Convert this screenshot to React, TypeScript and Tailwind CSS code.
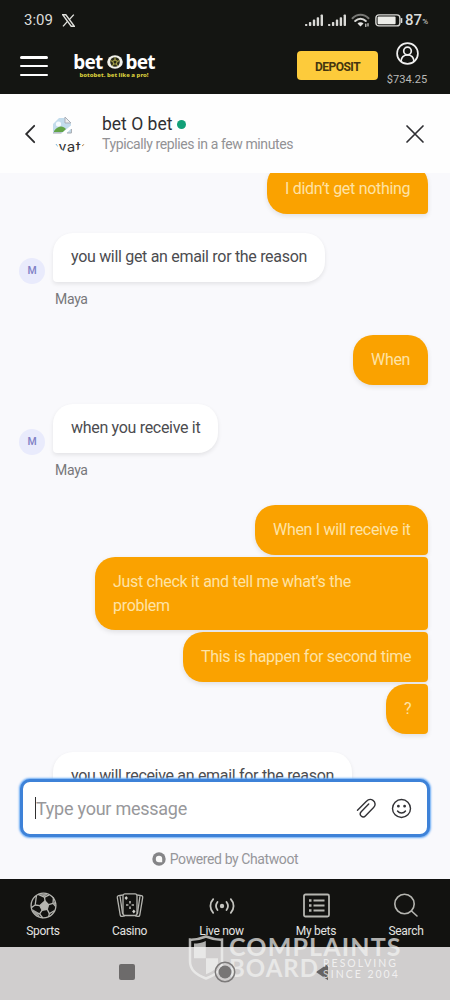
import React from "react";

function Signal() {
  return (
    <svg width="19" height="13" viewBox="0 0 19 13" fill="#d9d9d6">
      <rect x="0" y="10" width="2.4" height="2" rx=".8" />
      <rect x="3.9" y="8" width="2.4" height="4" rx=".8" />
      <rect x="7.8" y="5.6" width="2.4" height="6.4" rx=".8" />
      <rect x="11.7" y="3.2" width="2.4" height="8.8" rx=".8" />
      <rect x="15.6" y=".5" width="2.4" height="11.5" rx=".8" />
    </svg>
  );
}

function StatusBar() {
  return (
    <div className="flex h-10 items-center pl-[24px] pr-[22px] text-[#dcdcda]">
      <span className="w-[30px] text-[15px] leading-none">3:09</span>
      <svg className="ml-[8px]" width="13" height="13" viewBox="0 0 13 13" fill="none" stroke="#e0e0dc">
        <path d="M.8.8h3L12.2 12.2h-3z" strokeWidth="1.4" />
        <path d="M11.8.6 7.3 5.6M5.5 7.4 1 12.4" strokeWidth="1.4" />
      </svg>
      <div className="ml-auto flex items-center">
        <Signal />
        <span className="w-[4px]" />
        <Signal />
        <svg className="ml-[4px]" width="20" height="15" viewBox="0 0 20 15" fill="none" strokeLinecap="round">
          <path d="M1.5 5.2C6 .5 13 .5 17.5 5.2" stroke="#777774" strokeWidth="2" />
          <path d="M4.2 8C7.3 5 11.7 5 14.8 8" stroke="#d9d9d6" strokeWidth="2" />
          <path d="M6.5 10.4c1.8-1.6 4.2-1.6 6 0L9.5 13.5z" fill="#e4e4e2" />
          <path d="M14.8 11v2.5M17 10.5V13" stroke="#d9d9d6" strokeWidth="1.2" />
        </svg>
        <svg className="ml-[4px]" width="28" height="13" viewBox="0 0 28 13">
          <rect x=".9" y=".9" width="24" height="11" rx="3" fill="none" stroke="#d9d9d6" strokeWidth="1.4" />
          <rect x="2.6" y="2.6" width="18" height="7.6" rx="1" fill="#ecece8" />
          <path d="M26.6 4.6v3.8" stroke="#d9d9d6" strokeWidth="1.4" strokeLinecap="round" />
        </svg>
        <span className="ml-[2px] text-[15px] font-medium leading-none">87</span>
        <span className="mt-[3px] text-[8px] leading-none">%</span>
      </div>
    </div>
  );
}

function Logo() {
  return (
    <div className="ml-[26px] mt-[12px] flex w-[80px] flex-col items-center font-['Noto_Sans',sans-serif] font-bold">
      <div className="flex h-[20px] items-center text-[19px] leading-[20px] tracking-[-0.8px] text-white">
        <span>bet</span>
        <svg className="ml-[4px] mr-[3px]" width="16" height="14" viewBox="0 0 16 14">
          <ellipse cx="8" cy="7" rx="7.8" ry="6.8" fill="#f1f1eb" />
          <circle cx="8" cy="7" r="4.8" fill="#292a19" />
          <path d="m8 4.7 2.2 1.7-.9 2.6H6.7l-.9-2.6zM8 2.3v2.4m2.2 1.7 2.4-.8m-3.3 3.4 1.5 2m-4.1-2-1.5 2m.6-4.6-2.4-.8" fill="none" stroke="#a8a34a" strokeWidth="1.1" />
        </svg>
        <span>bet</span>
      </div>
      <div className="whitespace-nowrap text-[6px] font-extrabold leading-[7px] text-[#d8cd3c]">botobet. bet like a pro!</div>
    </div>
  );
}

function SiteHeader() {
  return (
    <div className="flex h-[54px] pl-[20px]">
      <div className="mt-[16px] flex h-[20px] w-[28px] flex-col justify-between">
        <span className="h-[2.5px] rounded-full bg-white" />
        <span className="h-[2.5px] rounded-full bg-white" />
        <span className="h-[2.5px] rounded-full bg-white" />
      </div>
      <Logo />
      <button className="ml-auto mt-[11px] h-[29px] w-[81px] rounded-[4px] bg-[#fdcb3b] pt-[2px] text-[12px] font-bold tracking-[-0.5px] text-[#44350f]">DEPOSIT</button>
      <div className="ml-[4px] mr-[18px] flex w-[50px] flex-col items-center">
        <svg className="mt-[2px]" width="23" height="23" viewBox="0 0 23 23" fill="none" stroke="#f0f0f0" strokeWidth="1.7">
          <circle cx="11.5" cy="11.5" r="10.4" />
          <circle cx="11.5" cy="9" r="3.8" />
          <path d="M5 19.4c.3-4 2.6-6.4 6.5-6.4s6.2 2.4 6.5 6.4" />
        </svg>
        <span className="mt-[7px] text-[11.1px] leading-[15px] text-[#b9b9b7]">$734.25</span>
      </div>
    </div>
  );
}

function ChatHeader() {
  return (
    <div className="flex h-[79px] shrink-0 items-center bg-[#fefefe] pl-[24px] pr-[25px]">
      <svg width="12" height="20" viewBox="0 0 12 20" fill="none" stroke="#2b2b2d" strokeWidth="1.8" strokeLinecap="round">
        <path d="M10.2 1.8 2.2 10l8 8.2" />
      </svg>
      <div className="ml-[17px] h-[36px] w-[34px] overflow-hidden rounded-b-[17px]">
        <svg width="19" height="18" viewBox="0 0 19 18">
          <path d="M0 17V8L6 2h6l6 6v9z" fill="#c3dcec" />
          <circle cx="5.5" cy="8" r="2.6" fill="#f6fbff" />
          <path d="M1 15c5-6 9-5 12-2l-3 3H1z" fill="#62a447" />
          <path d="m9 17 9.5-8v3.4l-5 4.6z" fill="#fff" />
          <path d="M12 1v6h6z" fill="#eee" stroke="#a9afb9" />
          <path d="M0 17h8.5M14 17h4.4v-4" stroke="#a4a8ae" fill="none" />
        </svg>
        <div className="ml-[-3px] mt-[4px] whitespace-nowrap text-[15.5px] leading-[18px] tracking-[.5px] text-[#333]">avatar</div>
      </div>
      <div className="ml-[15px] mt-[-1px]">
        <div className="flex h-[21px] items-center text-[17.5px] leading-[21px] text-[#303033]">
          <span className="whitespace-nowrap">bet O bet</span>
          <span className="ml-[5px] h-[9px] w-[9px] rounded-full bg-[#12a078]" />
        </div>
        <div className="whitespace-nowrap text-[14px] leading-[18px] tracking-[-0.4px] text-[#929295]">Typically replies in a few minutes</div>
      </div>
      <svg className="ml-auto" width="20" height="20" viewBox="0 0 20 20" stroke="#2f2f33" strokeWidth="1.7" strokeLinecap="round">
        <path d="m2 2 16 16M18 2 2 18" />
      </svg>
    </div>
  );
}

function Sent({ children, className }: { children: React.ReactNode; className: string }) {
  return (
    <div className={`ml-auto shrink-0 whitespace-nowrap rounded-l-[20px] rounded-br-[4px] bg-[#faa200] pl-[18px] pt-[13px] text-[16px] leading-[23.5px] tracking-[-0.3px] text-[#fee3a6] shadow-[0_2px_5px_rgba(0,0,0,0.10)] ${className}`}>
      {children}
    </div>
  );
}

function Received({ children, className }: { children: React.ReactNode; className: string }) {
  return (
    <div className={`ml-[34px] shrink-0 whitespace-nowrap rounded-r-[20px] rounded-tl-[20px] rounded-bl-[4px] bg-white pl-[18px] pt-[12px] text-[16px] leading-[23.5px] tracking-[-0.31px] text-[#4c4c50] shadow-[0_2px_4px_rgba(0,0,0,0.09)] ${className}`}>
      {children}
    </div>
  );
}

function AgentGroup({ text, className }: { text: string; className: string }) {
  return (
    <div className="relative mt-[19px] h-[77px] shrink-0">
      <div className="absolute left-0 top-[25px] flex h-[26px] w-[26px] items-center justify-center rounded-full bg-[#e9ebfc] text-[10.5px] font-medium text-[#7f80c5]">M</div>
      <Received className={`h-[49px] ${className}`}>{text}</Received>
      <div className="ml-[36px] mt-[8px] text-[14px] leading-[19px] tracking-[-0.3px] text-[#77777a]">Maya</div>
    </div>
  );
}

function Conversation() {
  return (
    <div className="flex h-[606px] shrink-0 flex-col overflow-hidden bg-[#f9f9fc] pl-[19px] pr-[22px]">
      <Sent className="mt-[-9px] h-[50px] w-[161px] rounded-tr-[20px]">I didn’t get nothing</Sent>
      <AgentGroup text="you will get an email ror the reason" className="w-[272px]" />
      <Sent className="mt-[25px] h-[50px] w-[75px] rounded-tr-[20px]">When</Sent>
      <AgentGroup text="when you receive it" className="w-[165px]" />
      <Sent className="mt-[24px] h-[50px] w-[173px] rounded-tr-[20px]">When I will receive it</Sent>
      <Sent className="mt-[2px] h-[73px] w-[333px] rounded-tr-[4px]">Just check it and tell me what’s the<br />problem</Sent>
      <Sent className="mt-[2px] h-[50px] w-[245px] rounded-tr-[4px]">This is happen for second time</Sent>
      <Sent className="mt-[2px] h-[50px] w-[42px] rounded-tr-[4px]">?</Sent>
      <Received className="mt-[18px] h-[50px] w-[299px]">you will receive an email for the reason</Received>
    </div>
  );
}

function Composer() {
  return (
    <div className="h-[100px] shrink-0 bg-[#f9f9fc] px-[20px]">
      <div className="flex h-[58px] w-[410px] items-center rounded-[10px] border-[3px] border-[#3e82d8] bg-white pl-[12px] pr-[15px] shadow-[0_0_2px_1px_#68aaf5]">
        <span className="h-[22px] w-px bg-[#303030]" />
        <span className="whitespace-nowrap text-[18px] tracking-[-0.25px] text-[#98989b]">Type your message</span>
        <svg className="ml-auto" width="21" height="21" viewBox="0 0 21 21" fill="none" stroke="#323236" strokeWidth="1.4" strokeLinecap="round" strokeLinejoin="round">
          <path d="m1.5 12.2 8.7-8.8c1.9-1.9 4.6-2.6 6.8-1 2.5 1.8 2.8 5 .6 7.2l-8 8.2c-1.3 1.4-3.2 1.4-4.4.3-1.2-1.2-1.2-3.1 0-4.4l7.5-7.6" />
        </svg>
        <svg className="ml-[14px]" width="21" height="21" viewBox="0 0 21 21" fill="none" stroke="#323236" strokeWidth="1.4" strokeLinecap="round">
          <circle cx="10.5" cy="10.5" r="9" />
          <path d="M6.5 13c2 2.6 6 2.6 8 0" />
          <circle cx="7.4" cy="8.2" r=".7" fill="#323236" />
          <circle cx="13.6" cy="8.2" r=".7" fill="#323236" />
        </svg>
      </div>
      <div className="mt-[13px] flex h-[18px] items-center justify-center">
        <svg width="14" height="14" viewBox="0 0 14 14">
          <circle cx="7" cy="7" r="6.7" fill="#858588" />
          <path d="M7 3.8a3.2 3.2 0 1 0 0 6.4h3.2V7A3.2 3.2 0 0 0 7 3.8z" fill="#fafafa" />
        </svg>
        <span className="ml-[4px] whitespace-nowrap text-[14px] tracking-[-0.4px] text-[#96969a]">Powered by Chatwoot</span>
      </div>
    </div>
  );
}

function BottomNav() {
  return (
    <nav className="flex h-[68px] shrink-0 bg-[#121210] pt-[13px] text-[12px] leading-[15px] tracking-[-0.3px] text-[#e3e3e1]">
      <div className="flex w-[86px] flex-col items-center gap-[5px]">
        <svg width="27" height="27" viewBox="0 0 27 27" fill="none" stroke="#b5b5b0" strokeWidth="1.3">
          <circle cx="13.5" cy="13.5" r="12.4" />
          <path d="m15 9 3.6 3.6-1.4 4.8-5 .8-2.4-4.6z" fill="#b5b5b0" />
          <path d="m15 9-.5-3.8m4.1 7.4 4.4-1.2m-5.8 6 2.2 4.2m-7.2-3.4-2.6 3.6m.2-8.2-4.6-.6" />
          <path d="m8.2 2.4 6.3 2.8 4.7-2.4M23.5 5.4l-.5 6 2.6 3M18.6 24.6l.8-3 4.8-2.8M2.8 19l6.8 2.8 3.2 4.2M6.4 3.8 5.2 13l-3.8 2.6" />
          <path d="m9 2.2 5.5 2.2 3.5-2.4zM2.2 17l5 3 2.8 4.8C6 23.6 3.2 20.8 2.2 17zM24.6 9l-1.2 2.6 2.2 2.6z" fill="#a2a29e" stroke="none" />
        </svg>
        <span>Sports</span>
      </div>
      <div className="flex w-[87px] flex-col items-center gap-[5px]">
        <svg width="28" height="27" viewBox="0 0 28 27" fill="none" stroke="#b5b5b0" strokeWidth="1.3">
          <rect x="7" y="1.8" width="14" height="21.7" rx="2" />
          <path d="M6.8 3 2.6 3.7c-1 .2-1.5 1-1.3 2L4.2 23c.2 1 .9 1.6 2 1.4l2.6-.6M21.2 3l4.2.7c1 .2 1.5 1 1.3 2L23.8 23c-.2 1-.9 1.6-2 1.4l-2.6-.6M4 4l2.6 18M24 4l-2.6 18" />
          <path d="M14 9v2.4m0 3V17M10 13h2.4m3.2 0H18" strokeWidth="1.6" />
          <path d="m10.2 4 1.7 2-1.7 2-1.7-2zm7.6 13.5 1.7 2-1.7 2-1.7-2z" fill="#d0d0cb" stroke="none" />
        </svg>
        <span>Casino</span>
      </div>
      <div className="flex w-[97px] flex-col items-center gap-[5px]">
        <svg width="28" height="27" viewBox="0 0 28 27" fill="none" stroke="#c4c4bf" strokeWidth="1.8" strokeLinecap="round">
          <circle cx="14" cy="14" r="2.2" fill="#c4c4bf" stroke="none" />
          <path d="M9.5 10c-1.8 2.4-1.8 5.6 0 8m9-8c1.8 2.4 1.8 5.6 0 8M5.2 7.2C1.5 11.2 1.5 16.8 5.2 20.8M22.8 7.2c3.7 4 3.7 9.6 0 13.6" />
        </svg>
        <span>Live now</span>
      </div>
      <div className="flex w-[92px] flex-col items-center gap-[5px]">
        <svg width="27" height="27" viewBox="0 0 27 27" fill="none" stroke="#b5b5b0" strokeWidth="1.8">
          <rect x="1" y="2.5" width="25" height="22" rx="1.5" />
          <path d="M10.5 8.5h11m-11 5h11m-11 5h11" />
          <path d="M6 8.5h2.5M6 13.5h2.5M6 18.5h2.5" strokeWidth="2.5" />
        </svg>
        <span>My bets</span>
      </div>
      <div className="flex w-[88px] flex-col items-center gap-[5px]">
        <svg width="26" height="27" viewBox="0 0 26 27" fill="none" stroke="#b5b5b0" strokeWidth="1.6" strokeLinecap="round">
          <circle cx="11.5" cy="12" r="9.7" />
          <path d="m18.5 19 5.5 5" />
        </svg>
        <span>Search</span>
      </div>
    </nav>
  );
}

function SystemBar() {
  return (
    <div className="flex h-[53px] shrink-0 items-center bg-[#d0cece] pl-[119px]">
      <span className="mt-[-4px] h-[16px] w-[16px] rounded-[2px] bg-[#6d6b6b]" />
      <svg className="relative z-10 ml-[79px] mt-[-3px]" width="22" height="22" viewBox="0 0 22 22">
        <circle cx="11" cy="11" r="9.7" fill="none" stroke="#7c7a7a" strokeWidth="1.5" />
        <circle cx="11" cy="11" r="6.5" fill="#777575" />
      </svg>
      <svg className="ml-[79px] mt-[-3px]" width="14" height="18" viewBox="0 0 14 18"><path d="M13 .8v16.4L1 9z" fill="#656363" /></svg>
    </div>
  );
}

function Watermark() {
  return (
    <div className="absolute left-[188px] top-[935px] flex font-[Lato,sans-serif] text-[#f3f3f2] opacity-70">
      <svg className="shrink-0" width="36" height="45" viewBox="0 0 36 45">
        <path d="M18 1.5C12 4 7 4.8 2 4.6v22C2 35 8 40 18 43.5 28 40 34 35 34 26.6v-22C29 4.8 24 4 18 1.5z" fill="none" stroke="#f3f3f2" strokeWidth="2.5" />
        <path d="M17.8 6C14 7.8 10 8.5 6 8.6v14.6h11.8zM18 23.2h12v4c0 5.3-4 9-12 12z" fill="#f3f3f2" />
      </svg>
      <div className="ml-[5px] w-[174px]">
        <div className="whitespace-nowrap text-[25px] font-bold leading-[22px] tracking-[1.15px]">COMPLAINTS</div>
        <div className="flex">
          <span className="w-[94px] text-[24px] font-bold leading-[22px] tracking-[1px]">BOARD</span>
          <div className="whitespace-nowrap pt-px text-[10.5px] leading-[11px] text-white">
            <div className="tracking-[2px]">RESOLVING</div>
            <div className="tracking-[2px]">SINCE 2004</div>
          </div>
        </div>
      </div>
    </div>
  );
}

export default function App() {
  return (
    <main className="relative flex h-[1000px] w-[450px] flex-col overflow-hidden bg-[#f9f9fc] font-[Roboto,sans-serif]">
      <header className="h-[94px] shrink-0 bg-[#141512]">
        <StatusBar />
        <SiteHeader />
      </header>
      <ChatHeader />
      <Conversation />
      <Composer />
      <BottomNav />
      <SystemBar />
      <Watermark />
    </main>
  );
}
